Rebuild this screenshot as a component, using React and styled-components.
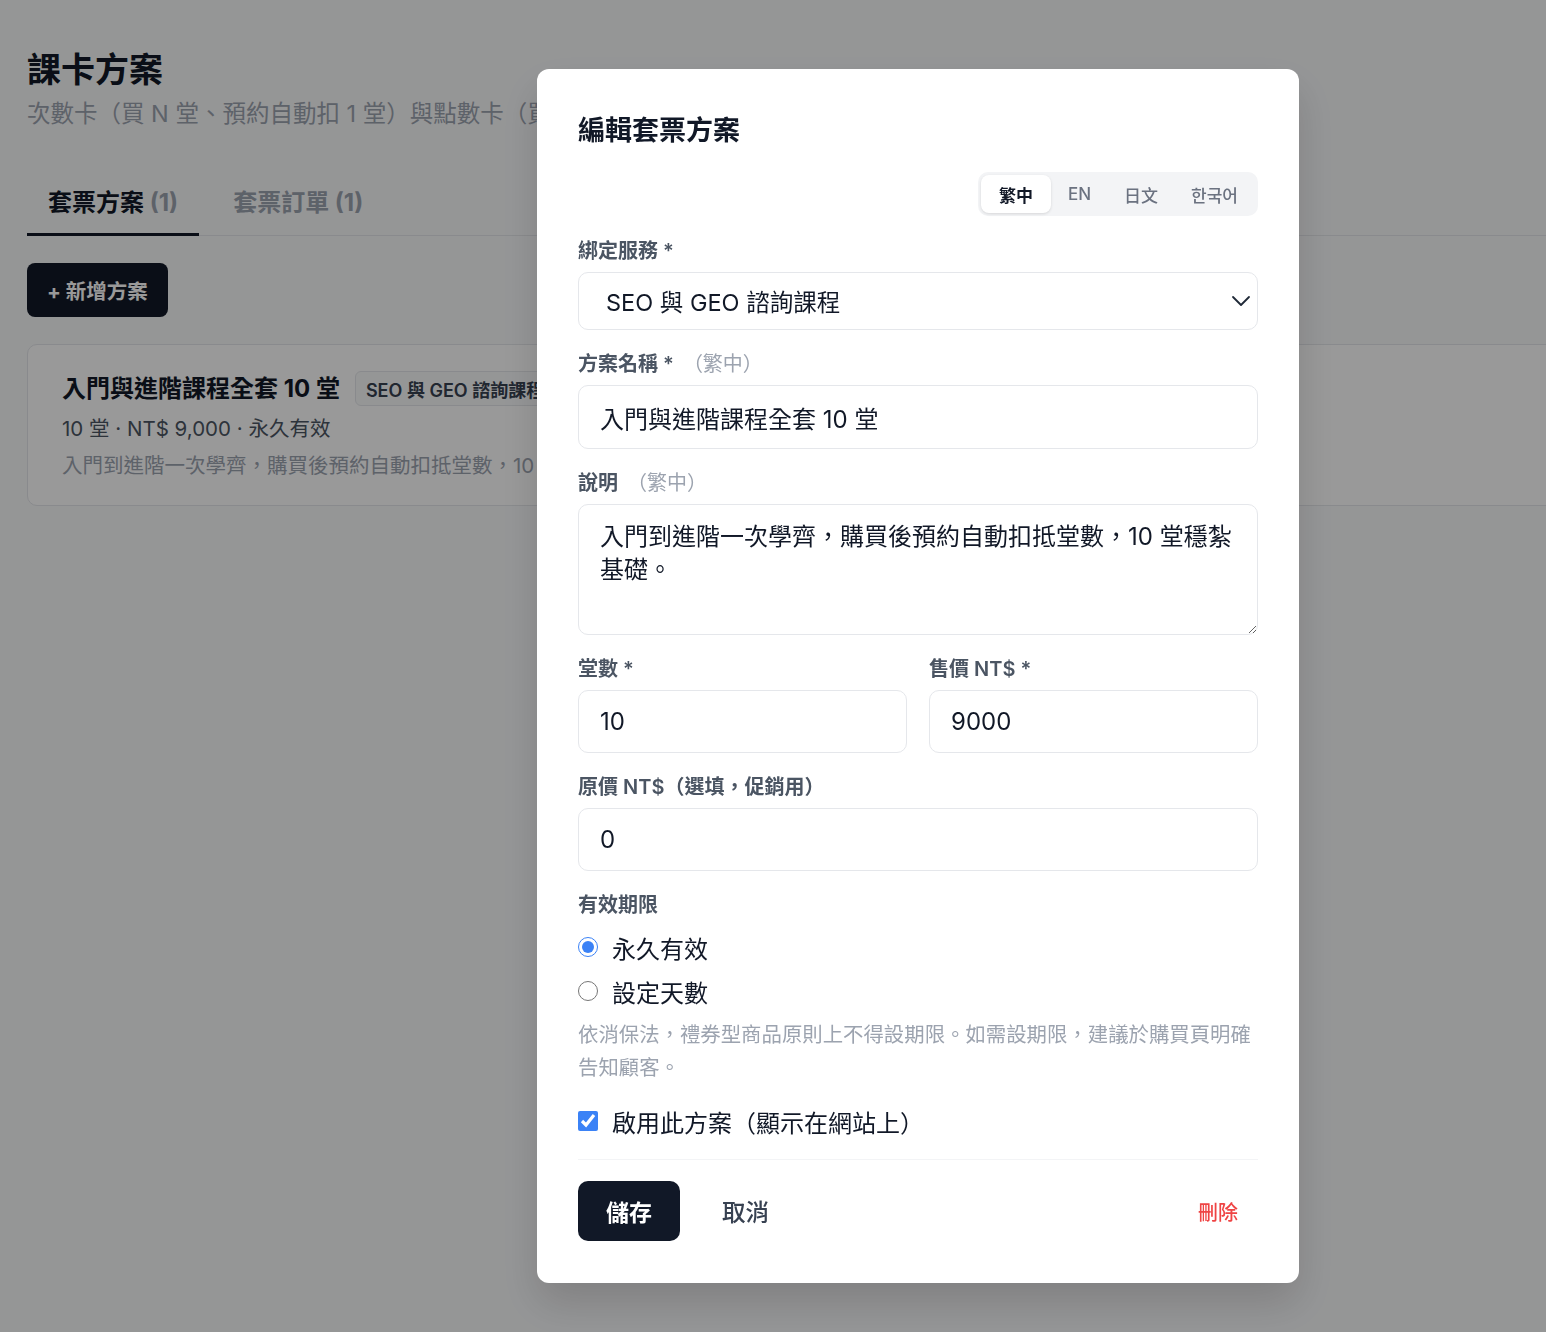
import React from "react";
import styled, { createGlobalStyle } from "styled-components";

const FONT = `"Inter", "Noto Sans CJK TC", "Noto Sans", sans-serif`;

const Global = createGlobalStyle`
  html, body { margin: 0; padding: 0; overflow: hidden; }
  body { font-family: ${FONT}; background: #f9fafb; color: #111827; }
  * { box-sizing: border-box; }
`;

const Page = styled.main`
  min-height: 1332px;
  padding: 49px 0 0 27px;
  background: #f9fafb;
`;

const PageTitle = styled.h1`
  margin: 0;
  font-size: 34px;
  line-height: 42px;
  font-weight: 700;
  color: #111827;
`;

const PageSub = styled.p`
  margin: 8px 0 0;
  font-size: 23.5px;
  line-height: 30px;
  color: #9ca3af;
  white-space: nowrap;
`;

const TabList = styled.div`
  margin-top: 43px;
  display: flex;
  gap: 13px;
  border-bottom: 1px solid #e5e7eb;
`;

const Tab = styled.div`
  padding: 16px 21px 15px;
  font-size: 24px;
  line-height: 30px;
  font-weight: 700;
  color: ${(p) => (p.$active ? "#111827" : "#9ca3af")};
  border-bottom: 3px solid ${(p) => (p.$active ? "#111827" : "transparent")};
  margin-bottom: -1px;
  span { color: #9ca3af; }
`;

const AddButton = styled.button`
  margin-top: 27px;
  height: 54px;
  padding: 0 20px;
  border: none;
  border-radius: 8px;
  background: #111827;
  color: #fff;
  font-family: ${FONT};
  font-size: 20.5px;
  font-weight: 700;
`;

const Card = styled.div`
  margin-top: 27px;
  width: calc(100% + 40px);
  background: #fff;
  border: 1px solid #e5e7eb;
  border-radius: 10px;
  padding: 26px 34px 24px;
`;

const CardHead = styled.div`
  display: flex;
  align-items: center;
  gap: 15px;
`;

const CardTitle = styled.div`
  font-size: 24px;
  line-height: 30px;
  font-weight: 700;
  color: #111827;
`;

const Badge = styled.span`
  height: 35px;
  display: inline-flex;
  align-items: center;
  padding: 0 10px;
  border: 1px solid #e5e7eb;
  border-radius: 6px;
  background: #f9fafb;
  font-size: 18px;
  font-weight: 600;
  color: #374151;
  white-space: nowrap;
`;

const CardMeta = styled.div`
  margin-top: 8px;
  font-size: 20.5px;
  line-height: 30px;
  white-space: nowrap;
  color: ${(p) => (p.$muted ? "#9ca3af" : "#4b5563")};
  & + & { margin-top: 7px; }
`;

const Overlay = styled.div`
  position: fixed;
  inset: 0;
  background: rgba(0, 0, 0, 0.4);
  display: flex;
  align-items: flex-start;
  padding: 69px 0 0 537px;
`;

const Modal = styled.div`
  width: 762px;
  background: #fff;
  border-radius: 12px;
  padding: 44px 41px 42px;
  box-shadow: 0 20px 40px rgba(0, 0, 0, 0.15);
`;

const ModalTitle = styled.h2`
  margin: 0;
  font-size: 27px;
  line-height: 36px;
  font-weight: 700;
  color: #111827;
`;

const Form = styled.div`
  margin-top: 23px;
  display: flex;
  flex-direction: column;
  gap: 22px;
`;

const LangBar = styled.div`
  align-self: flex-end;
  display: flex;
  align-items: center;
  height: 44px;
  padding: 3px;
  border-radius: 10px;
  background: #f3f4f6;
  margin-bottom: 1px;
`;

const LangTab = styled.div`
  height: 38px;
  display: flex;
  align-items: center;
  padding: 0 ${(p) => p.$px || 17}px;
  border-radius: 8px;
  font-size: 17px;
  font-weight: ${(p) => (p.$active ? 700 : 500)};
  color: ${(p) => (p.$active ? "#111827" : "#6b7280")};
  background: ${(p) => (p.$active ? "#fff" : "transparent")};
  box-shadow: ${(p) => (p.$active ? "0 1px 3px rgba(0,0,0,0.12)" : "none")};
`;

const Field = styled.div`
  display: flex;
  flex-direction: column;
  gap: 9px;
  min-width: 0;
`;

const Label = styled.label`
  font-size: 20px;
  line-height: 24px;
  font-weight: 600;
  color: #4b5563;
  white-space: nowrap;
  span { font-weight: 400; color: #9ca3af; margin-left: 4px; }
`;

const SelectBox = styled.div`
  height: 58px;
  display: flex;
  align-items: center;
  justify-content: space-between;
  padding: 0 6px 0 27px;
  border: 1px solid #e5e7eb;
  border-radius: 10px;
  font-size: 23.5px;
  color: #111827;
`;

const inputBase = `
  width: 100%;
  border: 1px solid #e5e7eb;
  border-radius: 10px;
  font-family: ${FONT};
  font-size: 24px;
  color: #111827;
  background: #fff;
  outline: none;
`;

const TextInput = styled.input`
  ${inputBase}
  height: ${(p) => p.$h || 64}px;
  padding: 0 21px;
`;

const TextArea = styled.textarea`
  ${inputBase}
  display: block;
  height: 131px;
  padding: 15px 21px;
  line-height: 33px;
  resize: vertical;
`;

const TwoCol = styled.div`
  display: grid;
  grid-template-columns: 1fr 1fr;
  gap: 22px;
`;

const RadioGroup = styled.div`
  margin-top: 5px;
  display: flex;
  flex-direction: column;
  gap: 12px;
`;

const OptionRow = styled.label`
  display: flex;
  align-items: center;
  gap: 14px;
  height: 32px;
  font-size: 24px;
  color: #111827;
  input {
    margin: 0;
    width: 20px;
    height: 20px;
    accent-color: #3b82f6;
  }
`;

const Help = styled.p`
  margin: 2px 0 -1px;
  font-size: 20.4px;
  line-height: 33px;
  color: #9ca3af;
`;

const Footer = styled.div`
  display: flex;
  align-items: center;
  gap: 22px;
  border-top: 1px solid #f3f4f6;
  padding-top: 21px;
`;

const SaveButton = styled.button`
  height: 60px;
  width: 102px;
  border: none;
  border-radius: 10px;
  background: #111827;
  color: #fff;
  font-family: ${FONT};
  font-size: 23px;
  font-weight: 700;
`;

const GhostButton = styled.button`
  height: 60px;
  padding: 0 20px;
  border: none;
  background: transparent;
  font-family: ${FONT};
  font-size: ${(p) => (p.$danger ? 20 : 23.5)}px;
  font-weight: 500;
  color: ${(p) => (p.$danger ? "#ef4444" : "#374151")};
  margin-left: ${(p) => (p.$push ? "auto" : 0)};
`;

const Chevron = () => (
  <svg width="20" height="12" viewBox="0 0 20 12" fill="none" stroke="#1f2937" strokeWidth="1.8" strokeLinecap="round" strokeLinejoin="round">
    <path d="M2 2l8 8 8-8" />
  </svg>
);

export default function App() {
  return (
    <>
      <Global />
      <Page>
        <PageTitle>課卡方案</PageTitle>
        <PageSub>次數卡（買 N 堂、預約自動扣 1 堂）與點數卡（買點數、依服務扣點）</PageSub>
        <TabList>
          <Tab $active>套票方案 <span>(1)</span></Tab>
          <Tab>套票訂單 (1)</Tab>
        </TabList>
        <AddButton>+ 新增方案</AddButton>
        <Card>
          <CardHead>
            <CardTitle>入門與進階課程全套 10 堂</CardTitle>
            <Badge>SEO 與 GEO 諮詢課程</Badge>
          </CardHead>
          <CardMeta>10 堂 · NT$ 9,000 · 永久有效</CardMeta>
          <CardMeta $muted>入門到進階一次學齊，購買後預約自動扣抵堂數，10 堂穩紮基礎。</CardMeta>
        </Card>
      </Page>

      <Overlay>
        <Modal>
          <ModalTitle>編輯套票方案</ModalTitle>
          <Form>
            <LangBar>
              <LangTab $active $px={18}>繁中</LangTab>
              <LangTab $px={17}>EN</LangTab>
              <LangTab $px={16}>日文</LangTab>
              <LangTab $px={17}>한국어</LangTab>
            </LangBar>

            <Field>
              <Label>綁定服務 *</Label>
              <SelectBox>
                SEO 與 GEO 諮詢課程
                <Chevron />
              </SelectBox>
            </Field>

            <Field>
              <Label>方案名稱 * <span>（繁中）</span></Label>
              <TextInput defaultValue="入門與進階課程全套 10 堂" />
            </Field>

            <Field>
              <Label>說明 <span>（繁中）</span></Label>
              <TextArea defaultValue="入門到進階一次學齊，購買後預約自動扣抵堂數，10 堂穩紮基礎。" />
            </Field>

            <TwoCol>
              <Field>
                <Label>堂數 *</Label>
                <TextInput $h={63} defaultValue="10" />
              </Field>
              <Field>
                <Label>售價 NT$ *</Label>
                <TextInput $h={63} defaultValue="9000" />
              </Field>
            </TwoCol>

            <Field>
              <Label>原價 NT$（選填，促銷用）</Label>
              <TextInput $h={63} defaultValue="0" />
            </Field>

            <Field>
              <Label>有效期限</Label>
              <RadioGroup>
                <OptionRow>
                  <input type="radio" name="validity" defaultChecked />
                  永久有效
                </OptionRow>
                <OptionRow>
                  <input type="radio" name="validity" />
                  設定天數
                </OptionRow>
              </RadioGroup>
              <Help>依消保法，禮券型商品原則上不得設期限。如需設期限，建議於購買頁明確告知顧客。</Help>
            </Field>

            <OptionRow>
              <input type="checkbox" defaultChecked />
              啟用此方案（顯示在網站上）
            </OptionRow>

            <Footer>
              <SaveButton>儲存</SaveButton>
              <GhostButton>取消</GhostButton>
              <GhostButton $danger $push>刪除</GhostButton>
            </Footer>
          </Form>
        </Modal>
      </Overlay>
    </>
  );
}
